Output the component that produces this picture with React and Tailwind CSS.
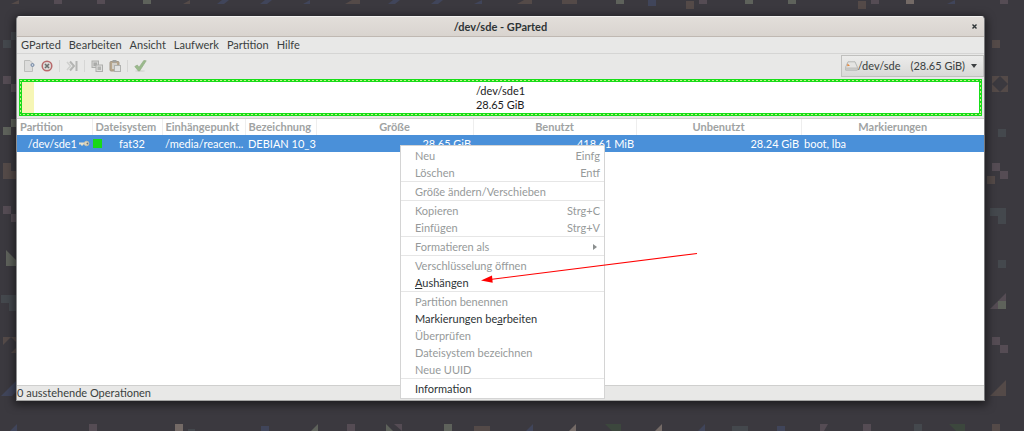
import clsx from 'clsx';

const MENUS = ['GParted', 'Bearbeiten', 'Ansicht', 'Laufwerk', 'Partition', 'Hilfe'];

const HEADERS = [
  'Partition',
  'Dateisystem',
  'Einhängepunkt',
  'Bezeichnung',
  'Größe',
  'Benutzt',
  'Unbenutzt',
  'Markierungen',
];

// each inner list is one group, groups are divided by a line
const CONTEXT_GROUPS = [
  [
    { label: 'Neu', keys: 'Einfg' },
    { label: 'Löschen', keys: 'Entf' },
  ],
  [{ label: 'Größe ändern/Verschieben' }],
  [
    { label: 'Kopieren', keys: 'Strg+C' },
    { label: 'Einfügen', keys: 'Strg+V' },
  ],
  [{ label: 'Formatieren als', submenu: true }],
  [
    { label: 'Verschlüsselung öffnen' },
    { label: 'Aushängen', mnemonic: 0, enabled: true },
  ],
  [
    { label: 'Partition benennen' },
    { label: 'Markierungen bearbeiten', mnemonic: 15, enabled: true },
    { label: 'Überprüfen' },
    { label: 'Dateisystem bezeichnen' },
    { label: 'Neue UUID' },
  ],
  [{ label: 'Information', enabled: true }],
];

const TONES = {
  brown: '#544a48',
  mauve: '#554c54',
  olive: '#5e625b',
  slate: '#44484d',
  blue: '#40455a',
  green: '#3c473d',
  sand: '#746a66',
};

// wallpaper confetti: [tone, path]
const SHAPES = [
  ['brown', 'M11 4L19 0V4Z'],
  ['mauve', 'M54 0h8v4h-8z'],
  ['mauve', 'M97 0h8v4h-8z'],
  ['olive', 'M143 0h8v4h-8z'],
  ['brown', 'M183 4L190 0V4Z'],
  ['blue', 'M217 4L222 0H229L224 4Z'],
  ['blue', 'M260 4L265 0H272L267 4Z'],
  ['blue', 'M303 4L310 0V4Z'],
  ['brown', 'M345 4L352 0H360V4Z'],
  ['blue', 'M388 4L393 0H400L395 4Z'],
  ['blue', 'M431 4L436 0H443L438 4Z'],
  ['blue', 'M474 4L482 0V4Z'],
  ['brown', 'M517 4L524 0H532V4Z'],
  ['brown', 'M562 0h15v4h-15z'],
  ['olive', 'M616 0h8v4h-8z'],
  ['blue', 'M648 0h8v6h-8z'],
  ['brown', 'M686 1h8v8h-8z'],
  ['mauve', 'M699 0h8v4h-8z'],
  ['olive', 'M745 0h8v4h-8z'],
  ['olive', 'M788 0h8v4h-8z'],
  ['brown', 'M858 1h8v8h-8z'],
  ['mauve', 'M871 0h8v4h-8z'],
  ['sand', 'M906 0h8v4h-8z'],
  ['blue', 'M947 4L955 0V4Z'],
  ['mauve', 'M1000 0h8v4h-8z'],
  ['slate', 'M3 40h8v8H3zM11 32h8v8h-8z'],
  ['mauve', 'M3 76h8v8H3zM11 84h8v8h-8z'],
  ['olive', 'M3 127h8v8H3zM11 119h8v8h-8z'],
  ['brown', 'M3 163h8v8h8v8H3z'],
  ['mauve', 'M3 206h8v8H3zM11 214h8v8h-8z'],
  ['olive', 'M6 250L22 266H6Z'],
  ['slate', 'M1 295h18v16H9v-8H1z'],
  ['brown', 'M3 337H11L3 345ZM11 337H19V345ZM19 345V353H11Z'],
  ['blue', 'M1 396L16 381V392L12 396Z'],
  ['brown', 'M992 40h8v8h-8z'],
  ['brown', 'M992 76h16v16h-16zM1000 76L992 84L1000 92L1008 84Z'],
  ['slate', 'M998 129h8v8h-8z'],
  ['mauve', 'M992 163h8v8h-8zM1000 171h8v8h-8z'],
  ['brown', 'M987 176h8v8h-8z'],
  ['slate', 'M990 208h16v16h-8v-8h-8z'],
  ['slate', 'M998 260h8v8h-8z'],
  ['mauve', 'M990 309L1006 293V309Z'],
  ['olive', 'M998 301h8v8h-8z'],
  ['mauve', 'M992 337h8v8h-8zM1000 345h8v8h-8z'],
  ['brown', 'M990 396L1006 380V396Z'],
  ['blue', 'M10 431L17 424V431Z'],
  ['mauve', 'M89 424h8v7h-8z'],
  ['sand', 'M175 424h8v7h-8z'],
  ['slate', 'M188 429h7v2h-7z'],
  ['blue', 'M261 426h8v5h-8z'],
  ['olive', 'M311 431L318 424V431Z'],
  ['mauve', 'M347 424h8v7h-8z'],
  ['olive', 'M386 424L393 431H386Z'],
  ['mauve', 'M394 424H402V431Z'],
  ['olive', 'M444 424h8v7h-8z'],
  ['brown', 'M474 426h16v5h-16z'],
  ['blue', 'M526 431L533 424V431Z'],
  ['sand', 'M569 431L576 424V431Z'],
  ['green', 'M605 424H621V431H612Z'],
  ['sand', 'M655 431L662 424V431Z'],
  ['blue', 'M698 431L705 424V431Z'],
  ['slate', 'M732 426h16v5h-16z'],
  ['blue', 'M777 426h8v5h-8z'],
  ['mauve', 'M820 424h8L824 431H820z'],
  ['mauve', 'M863 424h8v7h-8z'],
  ['slate', 'M914 424h8v7h-8z'],
  ['green', 'M949 424H965V431H956Z'],
  ['brown', 'M992 424h8v7h-8z'],
];

function Wallpaper() {
  return (
    <svg className="absolute top-0 left-0" width="1024" height="431" aria-hidden="true">
      {SHAPES.map(([tone, d], i) => (
        <path key={i} d={d} fill={TONES[tone]} fillRule="evenodd" />
      ))}
    </svg>
  );
}

const NewIcon = () => (
  <svg width="12" height="12" viewBox="0 0 12 12">
    <path d="M1.5 .5H7L9.5 3V11.5H1.5Z" fill="#dcdcdb" stroke="#bcbdbb" />
    <circle cx="9.5" cy="5" r="1.5" fill="#c9d3e0" stroke="#7287a3" />
  </svg>
);

const DeleteIcon = () => (
  <svg width="12" height="12" viewBox="0 0 12 12">
    <circle cx="6" cy="6" r="4.8" fill="#dcd9d8" stroke="#b86a6c" strokeWidth="1.5" />
    <path d="M4 4L8 8M8 4L4 8" stroke="#6c6e6d" strokeWidth="1.6" />
  </svg>
);

const ResizeIcon = () => (
  <svg width="12" height="12" viewBox="0 0 12 12">
    <path d="M1 2L4.5 6L1 10" fill="none" stroke="#cfd0ce" strokeWidth="1.6" />
    <path d="M4 1.5L8 6L4 10.5" fill="none" stroke="#b4b5b3" strokeWidth="2" />
    <path d="M10.5 1V11" stroke="#b4b5b3" strokeWidth="2" />
  </svg>
);

const CopyIcon = () => (
  <svg width="12" height="12" viewBox="0 0 12 12">
    <rect x="1" y="1" width="6.5" height="6.5" fill="#d4d5d3" stroke="#adaeac" />
    <rect x="2.5" y="2.5" width="3.5" height="3.5" fill="#a9aaa8" />
    <rect x="5" y="5" width="6.5" height="6.5" fill="#dededd" stroke="#adaeac" />
    <rect x="6.5" y="6.5" width="3.5" height="3.5" fill="#b3b4b2" />
  </svg>
);

const PasteIcon = () => (
  <svg width="12" height="12" viewBox="0 0 12 12">
    <rect x="1" y="1.5" width="9" height="9.5" rx="1" fill="#b9a78c" stroke="#a39888" />
    <rect x="3.5" y="0" width="4" height="2.5" fill="#a0a19f" />
    <rect x="3" y="3" width="5" height="6" fill="#d2cfc9" />
    <rect x="5.5" y="5.5" width="6" height="6" fill="#e2e2e1" stroke="#b0b1af" />
  </svg>
);

const ApplyIcon = () => (
  <svg width="13" height="12" viewBox="0 0 13 12">
    <ellipse cx="6" cy="11" rx="5" ry="1" fill="#d8d9d6" />
    <path d="M.8 6.5L3.3 5L5 7.3L9.8 .5L12.2 .8L5.6 11H4.4Z" fill="#9aba8c" stroke="#93ad86" strokeWidth=".7" />
  </svg>
);

const DriveIcon = () => (
  <svg width="13" height="10" viewBox="0 0 13 10">
    <path d="M3 .8H10L12.3 6V9.2H.7V6Z" fill="#e4e4e2" stroke="#b0b2b0" strokeWidth=".9" />
    <path d="M1 6.4H12V8.8H1Z" fill="#c4c5c3" />
    <path d="M2.4 2.4L5 4.8L2.2 5.2Z" fill="#e2863c" />
  </svg>
);

const KeyIcon = () => (
  <svg width="11" height="7" viewBox="0 0 11 7">
    <path d="M0 2.5H6V4.5H4V5.5H2V4.5H0Z" fill="#e6e0cc" />
    <circle cx="7.6" cy="3.5" r="2.3" fill="#e0d9bf" stroke="#c9c2a8" strokeWidth=".8" />
    <circle cx="8.4" cy="3.5" r=".9" fill="#69707c" />
  </svg>
);

function ToolButton({ label, children }) {
  return (
    <button type="button" aria-label={label} className="flex h-4 w-[18px] items-center justify-center">
      {children}
    </button>
  );
}

const Divider = () => <span className="mx-[3px] h-3 w-px bg-[#d6d6d5]" />;

function Toolbar() {
  return (
    <div className="flex h-6 items-center border-t border-[#d5d5d4] pl-[3px]">
      <ToolButton label="Neu"><NewIcon /></ToolButton>
      <ToolButton label="Löschen"><DeleteIcon /></ToolButton>
      <Divider />
      <ToolButton label="Größe ändern/Verschieben"><ResizeIcon /></ToolButton>
      <Divider />
      <ToolButton label="Kopieren"><CopyIcon /></ToolButton>
      <ToolButton label="Einfügen"><PasteIcon /></ToolButton>
      <Divider />
      <ToolButton label="Anwenden"><ApplyIcon /></ToolButton>
      <button
        type="button"
        aria-haspopup="listbox"
        className="ml-auto flex h-[22px] items-center border border-[#c0c0be] bg-linear-to-b from-[#ececeb] to-[#d9d9d7] pr-[6px] pl-[3px]"
      >
        <DriveIcon />
        <span>/dev/sde</span>
        <span className="ml-[10px]">(28.65 GiB)</span>
        <svg className="ml-[6px]" width="6" height="4" viewBox="0 0 6 4">
          <path d="M0 0H6L3 4Z" fill="#3c4041" />
        </svg>
      </button>
    </div>
  );
}

function DiskMap() {
  return (
    <div className="relative mx-[2px] mt-[2px] flex h-[37px] border-[3px] border-[#19dd19] bg-white">
      <svg className="absolute -top-[2px] -left-[2px] size-[calc(100%+4px)]" aria-hidden="true">
        <rect width="100%" height="100%" fill="none" stroke="#c4f48c" strokeWidth="2" strokeDasharray="2 2" />
      </svg>
      <span className="w-3 bg-[#f6f6b5]" />
      <div className="flex flex-1 items-center justify-center pr-3 text-[#1c1c1c]">
        <p className="leading-[14px]">
          /dev/sde1
          <br />
          28.65 GiB
        </p>
      </div>
    </div>
  );
}

function PartitionTable() {
  return (
    <table className="w-full table-fixed border-collapse whitespace-nowrap">
      <colgroup>
        <col className="w-[75px]" />
        <col className="w-[70px]" />
        <col className="w-[83px]" />
        <col className="w-[71px]" />
        <col className="w-[157px]" />
        <col className="w-[163px]" />
        <col className="w-[165px]" />
        <col />
      </colgroup>
      <thead>
        <tr className="h-4">
          {HEADERS.map((h, i) => (
            <th
              key={h}
              className={clsx(
                'border-r border-[#eeeeee] p-0 font-bold text-[#a0a3a3] last:border-r-0',
                i < 4 ? 'pl-[3px] text-left' : 'text-center',
              )}
            >
              {h}
            </th>
          ))}
        </tr>
      </thead>
      <tbody>
        <tr className="h-[17px] bg-[#4a90d9] text-white">
          <td className="p-0">
            <span className="flex items-center justify-end gap-[2px] pr-[2px]">
              /dev/sde1
              <KeyIcon />
            </span>
          </td>
          <td className="p-0 pl-px">
            <span className="flex items-center">
              <span className="size-[9px] bg-[#18d918]" />
              <span className="flex-1 text-center">fat32</span>
            </span>
          </td>
          <td className="p-0 pl-[3px]">/media/reacen...</td>
          <td className="p-0 pl-[3px]">DEBIAN 10_3</td>
          <td className="p-0 pr-[2px] text-right">28.65 GiB</td>
          <td className="p-0 pr-[2px] text-right">418.61 MiB</td>
          <td className="p-0 pr-[2px] text-right">28.24 GiB</td>
          <td className="p-0 pl-[3px]">boot, lba</td>
        </tr>
      </tbody>
    </table>
  );
}

function MenuLabel({ label, mnemonic }) {
  if (mnemonic == null) return <span>{label}</span>;
  return (
    <span>
      {label.slice(0, mnemonic)}
      <u className="underline-offset-1">{label[mnemonic]}</u>
      {label.slice(mnemonic + 1)}
    </span>
  );
}

function ContextMenu() {
  return (
    <div
      role="menu"
      className="absolute top-[128px] left-[383px] w-[205px] divide-y divide-[#e6e6e6] border border-[#d4d4d4] bg-white"
    >
      {CONTEXT_GROUPS.map((group, i) => (
        <div key={i} className="pt-px last:pb-px">
          {group.map((item) => (
            <button
              key={item.label}
              type="button"
              role="menuitem"
              disabled={!item.enabled}
              className={clsx(
                'flex h-[17px] w-full items-center justify-between pr-1 pl-[14px]',
                item.enabled ? 'text-[#2e3436]' : 'text-[#969a9a]',
              )}
            >
              <MenuLabel label={item.label} mnemonic={item.mnemonic} />
              {item.keys && <span>{item.keys}</span>}
              {item.submenu && (
                <svg className="mr-[3px]" width="4" height="6" viewBox="0 0 4 6">
                  <path d="M0 0L4 3L0 6Z" fill="#8b8f8f" />
                </svg>
              )}
            </button>
          ))}
        </div>
      ))}
    </div>
  );
}

const Arrow = () => (
  <svg className="pointer-events-none absolute top-[233px] left-[463px]" width="220" height="36" aria-hidden="true">
    <path d="M217 3.5L10 29.5" stroke="#ff0000" strokeWidth="1.2" />
    <path d="M1 30.5L12 25.5L12.7 32.8Z" fill="#ff0000" />
  </svg>
);

export default function App() {
  return (
    <div className="relative flex min-h-screen overflow-hidden bg-[#3b393f] pt-4 pr-[39px] pb-[30px] pl-4 font-['Lato',sans-serif] text-[11px] leading-4 text-[#3a3f40]">
      <Wallpaper />
      <main className="relative flex flex-1 flex-col rounded-t-[4px] border border-t-[#f3f2f1] border-r-[#77787a] border-b-[#a5a5a4] border-l-[#8f9091] bg-[#e8e8e7] shadow-[0_2px_8px_2px_rgba(0,0,0,0.5)]">
        <header className="flex h-5 items-center rounded-t-[3px] border-b border-[#bfb8b2] bg-linear-to-b from-[#e2deda] to-[#d9d4cf] pr-[7px] pl-3">
          <h1 className="flex-1 text-center font-bold text-[#2e3436]">/dev/sde - GParted</h1>
          <button type="button" aria-label="Schließen">
            <svg width="5" height="5" viewBox="0 0 5 5">
              <path d="M.5 .5L4.5 4.5M4.5 .5L.5 4.5" stroke="#2e3436" strokeWidth="1.4" />
            </svg>
          </button>
        </header>
        <nav className="flex h-4 items-center gap-2 pl-1">
          {MENUS.map((m) => (
            <button key={m} type="button">{m}</button>
          ))}
        </nav>
        <Toolbar />
        <DiskMap />
        <section className="mt-[2px] flex-1 border-y border-[#cfcfce] bg-white">
          <PartitionTable />
        </section>
        <footer className="h-[14px] leading-[14px]">0 ausstehende Operationen</footer>
        <ContextMenu />
        <Arrow />
      </main>
    </div>
  );
}
